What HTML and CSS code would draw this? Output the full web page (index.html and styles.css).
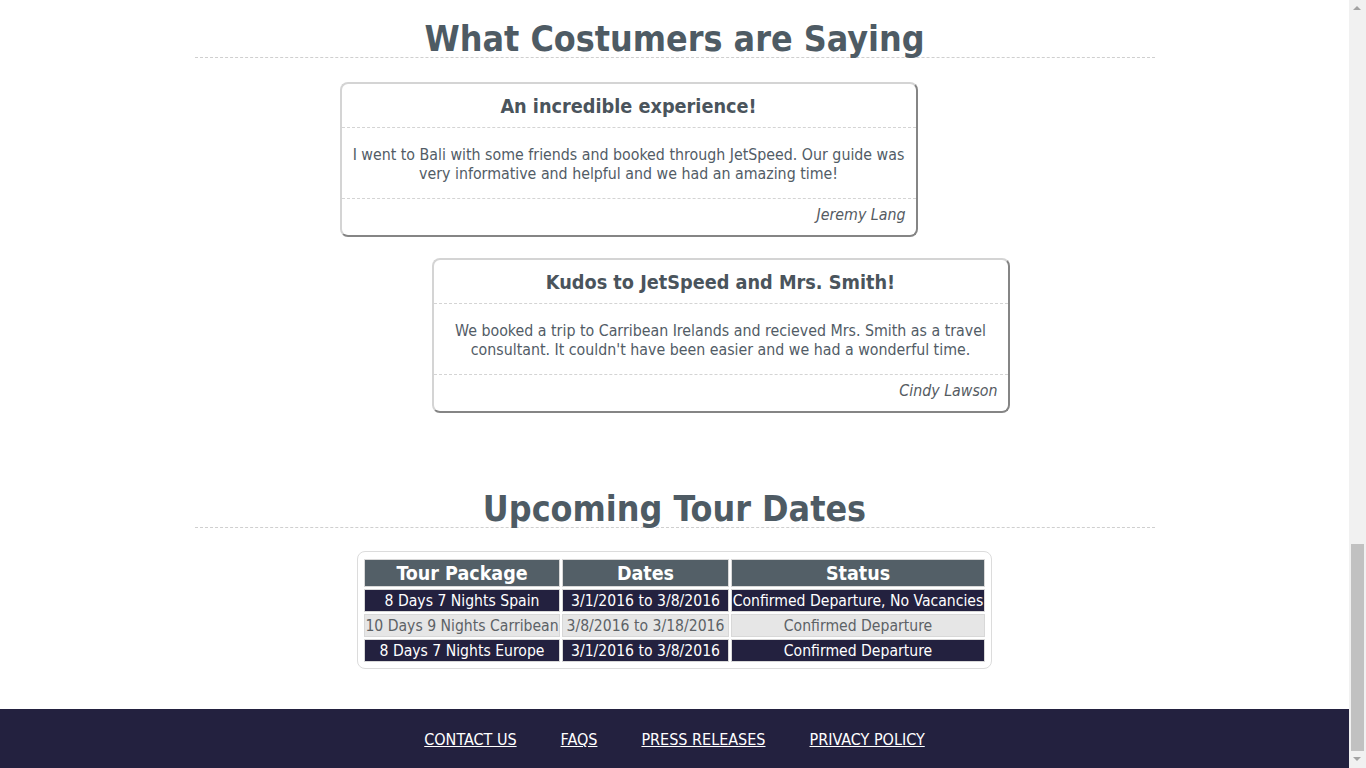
FILE: index.html
```html
<!DOCTYPE html>
<html lang="en">
<head>
<meta charset="utf-8">
<title>JetSpeed - Testimonials and Tour Dates</title>
<link rel="stylesheet" href="styles.css">
</head>
<body>
<main class="container">
  <section class="testimonials">
    <h2 class="section-title">What Costumers are Saying</h2>
    <article class="card card-first">
      <h3 class="card-title">An incredible experience!</h3>
      <p class="card-body">I went to Bali with some friends and booked through JetSpeed. Our guide was very informative and helpful and we had an amazing time!</p>
      <p class="card-author">Jeremy Lang</p>
    </article>
    <article class="card card-second">
      <h3 class="card-title">Kudos to JetSpeed and Mrs. Smith!</h3>
      <p class="card-body">We booked a trip to Carribean Irelands and recieved Mrs. Smith as a travel consultant. It couldn't have been easier and we had a wonderful time.</p>
      <p class="card-author">Cindy Lawson</p>
    </article>
  </section>

  <section class="tours">
    <h2 class="section-title">Upcoming Tour Dates</h2>
    <div class="table-box">
      <table class="tour-table">
        <thead>
          <tr>
            <th class="col-package">Tour Package</th>
            <th class="col-dates">Dates</th>
            <th class="col-status">Status</th>
          </tr>
        </thead>
        <tbody>
          <tr class="row-dark">
            <td>8 Days 7 Nights Spain</td>
            <td>3/1/2016 to 3/8/2016</td>
            <td>Confirmed Departure, No Vacancies</td>
          </tr>
          <tr class="row-light">
            <td>10 Days 9 Nights Carribean</td>
            <td>3/8/2016 to 3/18/2016</td>
            <td>Confirmed Departure</td>
          </tr>
          <tr class="row-dark">
            <td>8 Days 7 Nights Europe</td>
            <td>3/1/2016 to 3/8/2016</td>
            <td>Confirmed Departure</td>
          </tr>
        </tbody>
      </table>
    </div>
  </section>
</main>
<footer class="site-footer">
  <nav class="footer-nav">
    <a href="#">CONTACT US</a>
    <a href="#">FAQS</a>
    <a href="#">PRESS RELEASES</a>
    <a href="#">PRIVACY POLICY</a>
  </nav>
</footer>
<div class="scrollbar" aria-hidden="true">
  <span class="scroll-arrow scroll-up"></span>
  <span class="scroll-thumb"></span>
  <span class="scroll-arrow scroll-down"></span>
</div>
</body>
</html>
```
FILE: styles.css
```css
body {
  margin: 0 17px 0 0;
  font-family: "DejaVu Sans Condensed", "DejaVu Sans", sans-serif;
  color: #4f5961;
  background: #fff;
}
.container {
  width: 960px;
  margin: 0 auto;
  padding-top: 21px;
}
.section-title {
  margin: 0;
  font-size: 35.5px;
  line-height: 36px;
  font-weight: bold;
  text-align: center;
  color: #4e5b64;
  border-bottom: 1px dashed #cfcfcf;
}
.testimonials {
  display: flex;
  flex-direction: column;
}
.card {
  width: 574px;
  border: 2px solid;
  border-color: #d4d4d4 #858585 #858585 #d4d4d4;
  border-radius: 8px;
  background: #fff;
}
.card-first {
  margin: 24px 0 0 145px;
}
.card-second {
  margin: 21px 0 0 237px;
}
.card-title {
  margin: 0;
  padding: 11px 10px 8px;
  font-size: 19.7px;
  line-height: 24px;
  font-weight: bold;
  text-align: center;
  color: #4a545c;
  border-bottom: 1px dashed #d4d4d4;
}
.card-body {
  margin: 0;
  padding: 17px 8px 15px;
  font-size: 15.8px;
  line-height: 19px;
  text-align: center;
  color: #525c66;
  border-bottom: 1px dashed #d4d4d4;
}
.card-author {
  margin: 0;
  padding: 6px 10px 11px;
  font-size: 15.8px;
  line-height: 19px;
  font-style: italic;
  text-align: right;
  color: #555b62;
}
.tours {
  margin-top: 78px;
  display: flex;
  flex-direction: column;
  align-items: center;
}
.tours .section-title {
  align-self: stretch;
}
.table-box {
  margin-top: 23px;
  padding: 5px 4px 4px;
  border: 1px solid #dcdcdc;
  border-radius: 8px;
}
.tour-table {
  border-spacing: 2px;
  font-size: 15.6px;
}
.tour-table th,
.tour-table td {
  padding: 0;
  border: 1px solid #d8d8d8;
  text-align: center;
  white-space: nowrap;
}
.tour-table th {
  background: #535f67;
  color: #fff;
  font-size: 19.5px;
  line-height: 25px;
  padding-top: 1px;
  font-weight: bold;
}
.tour-table td {
  line-height: 20px;
  padding-top: 1px;
}
.col-package { width: 194px; }
.col-dates { width: 165px; }
.col-status { width: 252px; }
.row-dark td {
  background: #23213f;
  color: #fff;
}
.row-light td {
  background: #e6e6e6;
  color: #5d6266;
}
.site-footer {
  margin-top: 40px;
  background: #23213f;
  height: 59px;
  display: flex;
  align-items: center;
  justify-content: center;
}
.footer-nav {
  display: flex;
  gap: 44px;
  padding-top: 2px;
}
.footer-nav a {
  color: #fff;
  font-size: 16px;
  line-height: 19px;
  text-decoration: underline;
}
.scrollbar {
  position: fixed;
  top: 0;
  right: 0;
  width: 17px;
  height: 100vh;
  background: #f1f1f1;
}
.scroll-thumb {
  position: absolute;
  left: 2px;
  top: 544px;
  width: 13px;
  height: 207px;
  background: #c1c1c1;
}
.scroll-arrow {
  position: absolute;
  left: 4px;
  width: 0;
  height: 0;
  border-left: 4.5px solid transparent;
  border-right: 4.5px solid transparent;
}
.scroll-up {
  top: 6px;
  border-bottom: 4px solid #a3a3a3;
}
.scroll-down {
  bottom: 7px;
  border-top: 4px solid #a3a3a3;
}
```
